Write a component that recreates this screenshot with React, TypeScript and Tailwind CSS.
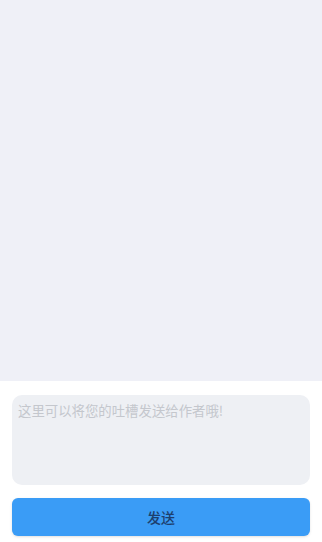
export default function App() {
  return (
    <div
      className="w-[322px] h-[542px] flex flex-col bg-white"
      style={{ fontFamily: '"Noto Sans CJK SC", "Noto Sans", sans-serif' }}
    >
      <div className="h-[381px] shrink-0 bg-[#eff0f7]" />
      <div className="flex-1 px-[12px] pt-[14px] flex flex-col">
        <textarea
          placeholder="这里可以将您的吐槽发送给作者哦!"
          className="h-[90px] w-full resize-none rounded-[10px] bg-[#eef0f4] px-[6px] py-[6px] text-[13.4px] leading-[18px] text-gray-700 placeholder:text-[#c4c7cd] outline-none"
        />
        <button className="mt-[13px] h-[38px] w-full rounded-[6px] bg-[#3a9cf6] text-[14px] font-medium text-[#1d3f6e] shadow-sm">
          发送
        </button>
      </div>
    </div>
  );
}
